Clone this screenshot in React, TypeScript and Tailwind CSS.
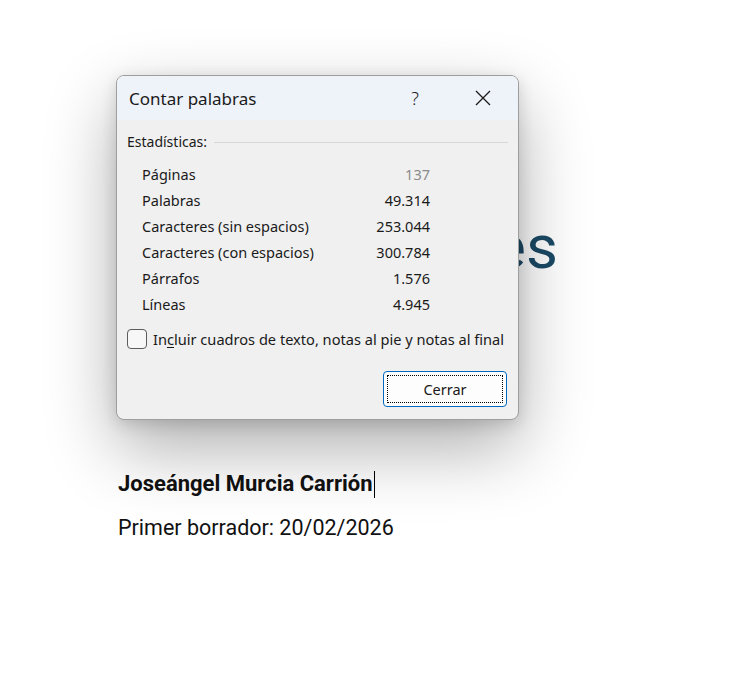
const stats = [
  { label: "Páginas", value: "137", muted: true },
  { label: "Palabras", value: "49.314" },
  { label: "Caracteres (sin espacios)", value: "253.044" },
  { label: "Caracteres (con espacios)", value: "300.784" },
  { label: "Párrafos", value: "1.576" },
  { label: "Líneas", value: "4.945" },
];

function CloseIcon() {
  return (
    <svg width="16" height="16" viewBox="0 0 16 16" fill="none">
      <path d="M1 1L15 15M15 1L1 15" stroke="#1a1a1a" strokeWidth="1.3" />
    </svg>
  );
}

function WordCountDialog() {
  return (
    <div className="absolute left-[116px] top-[75px] flex h-[345px] w-[403px] flex-col overflow-hidden rounded-[8px] border border-[#9e9e9e] bg-[#f0f0f0] font-['Noto_Sans',sans-serif] text-[#1a1a1a] shadow-[0_28px_70px_rgba(0,0,0,0.32),0_4px_16px_rgba(0,0,0,0.14)]">
      {/* Title bar */}
      <div className="flex h-[44px] items-center bg-[#eef2f9] pl-[12px]">
        <span className="text-[17px] leading-none">Contar palabras</span>
        <span className="ml-auto w-[20px] text-center text-[18px] font-light leading-none">?</span>
        <span className="ml-[50px] mr-[27px] flex items-center">
          <CloseIcon />
        </span>
      </div>

      {/* Body */}
      <div className="flex flex-1 flex-col pl-[10px] pr-[10px] pt-[12px]">
        <div className="flex h-[20px] items-center gap-[7px]">
          <span className="text-[14px] leading-none">Estadísticas:</span>
          <div className="h-px flex-1 bg-[#d7d7d7]" />
        </div>

        <div className="mt-[9px] w-[303px] pl-[15px]">
          {stats.map((s) => (
            <div key={s.label} className="flex h-[26px] items-center justify-between text-[14.5px] leading-none">
              <span>{s.label}</span>
              <span className={s.muted ? "text-[#8a8a8a]" : ""}>{s.value}</span>
            </div>
          ))}
        </div>

        <label className="mt-[12px] flex h-[20px] items-center gap-[6px]">
          <span className="h-[20px] w-[20px] rounded-[4px] border border-[#5c5c5c] bg-[#f7f7f7]" />
          <span className="text-[14.6px] leading-none">
            In<span className="underline underline-offset-2">c</span>luir cuadros de texto, notas al pie y notas al final
          </span>
        </label>

        <div className="mt-[22px] flex justify-end pr-px">
          <button className="flex h-[36px] w-[124px] items-center justify-center rounded-[4px] border border-[#0067c0] bg-[#fdfdfd] p-[3px]">
            <span className="flex h-full w-full items-center justify-center border border-dotted border-black text-[14.5px] leading-none">
              Cerrar
            </span>
          </button>
        </div>
      </div>
    </div>
  );
}

export default function App() {
  return (
    <div className="relative h-[681px] w-full overflow-hidden bg-white">
      {/* Document page behind the dialog */}
      <div className="pl-[118px] pt-[216px] font-['Roboto',sans-serif]">
        <div className="w-[440px] whitespace-nowrap text-right text-[62px] leading-[62px] text-[#1b4a66]">es</div>
        <div className="mt-[192px] flex items-center text-[22px] font-bold leading-[28px] text-[#111]">
          Joseángel Murcia Carrión
          <span className="ml-px inline-block h-[27px] w-px bg-black" />
        </div>
        <div className="mt-[16px] text-[21.5px] leading-[28px] text-[#111]">Primer borrador: 20/02/2026</div>
      </div>

      <WordCountDialog />
    </div>
  );
}
